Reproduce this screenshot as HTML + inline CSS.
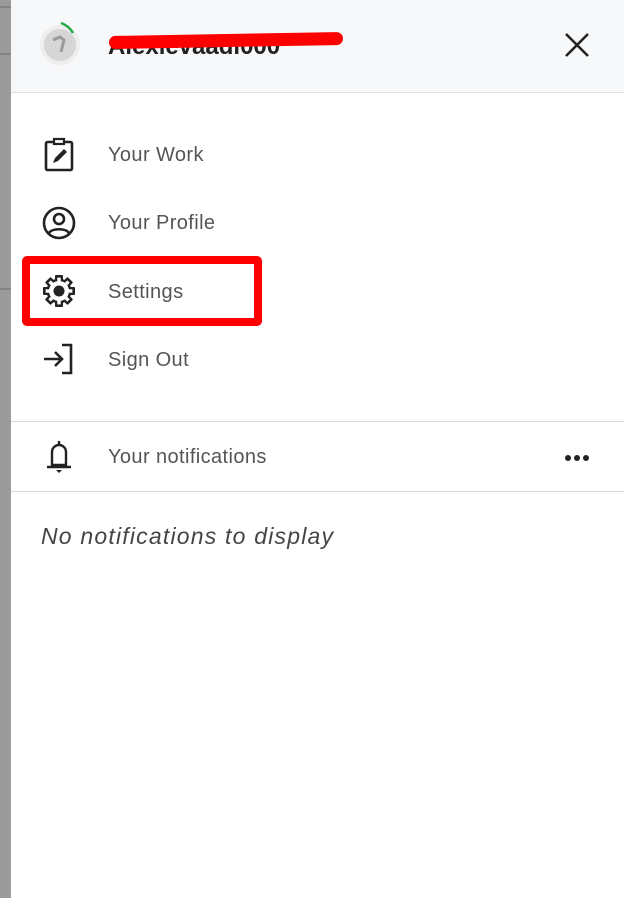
<!DOCTYPE html>
<html><head><meta charset="utf-8"><style>
*{margin:0;padding:0;box-sizing:border-box}
html,body{width:624px;height:898px;overflow:hidden;background:#fff;font-family:"Liberation Sans",sans-serif}
.strip{position:absolute;left:0;top:0;width:11px;height:898px;background:#9b9b9b}
.strip i{position:absolute;left:0;width:11px;height:2px;background:#858585}
.panel{position:absolute;left:11px;top:0;right:0;bottom:0;background:#fff}
.head{position:absolute;left:0;right:0;top:0;height:93px;background:#f7f8fa;border-bottom:1px solid #dcdde0}
.row{position:absolute;left:97px;font-size:20px;letter-spacing:0.4px;color:#555}
.ic{position:absolute}
.hr{position:absolute;left:0;right:0;height:1px;background:#d8d8d8}
</style></head><body>
<div class="strip"><i style="top:6px"></i><i style="top:53px"></i><i style="top:288px"></i></div>
<div class="panel">
<div class="head">
 <svg class="ic" style="left:25px;top:20px" width="50" height="50" viewBox="0 0 50 50">
  <circle cx="24" cy="25" r="20" fill="#eeeeee"/>
  <circle cx="24" cy="25" r="16" fill="#d6d6d6"/>
  <path d="M17 20l7-3 4 3-3 12" stroke="#9a9a9a" stroke-width="3" fill="none"/>
  <path d="M25 3 A22 22 0 0 1 37 13" stroke="#22aa44" stroke-width="2.5" fill="none"/>
 </svg>
 <div style="position:absolute;left:97px;top:33px;font-size:24px;font-weight:bold;color:#222">Alexievaadl000</div>
 <div style="position:absolute;left:98px;top:34px;width:234px;height:13px;background:#f00;border-radius:7px;transform:rotate(-1deg)"></div>
 <svg class="ic" style="left:553px;top:32px" width="26" height="26" viewBox="0 0 26 26"><path d="M2 2L24 24M24 2L2 24" stroke="#222" stroke-width="2.6"/></svg>
</div>

<svg class="ic" style="left:32px;top:137px" width="34" height="36" viewBox="0 0 34 36"><rect x="3" y="5" width="26" height="28" rx="1.5" fill="none" stroke="#222" stroke-width="2.6"/><rect x="11" y="2" width="10" height="5" fill="#fff" stroke="#222" stroke-width="2.2"/><path d="M10 26l2-5 9-9 3 3-9 9z" fill="#222"/></svg>
<div class="row" style="top:144px">Your Work</div>

<svg class="ic" style="left:30px;top:205px" width="36" height="36" viewBox="0 0 36 36"><circle cx="18" cy="18" r="15" fill="none" stroke="#222" stroke-width="2.6"/><circle cx="18" cy="14" r="5" fill="none" stroke="#222" stroke-width="2.6"/><path d="M8 28c3-5 17-5 20 0" fill="none" stroke="#222" stroke-width="2.6"/></svg>
<div class="row" style="top:212px">Your Profile</div>

<div style="position:absolute;left:11px;top:256px;width:240px;height:70px;border:8px solid #f00;border-radius:5px"></div>
<svg class="ic" style="left:30px;top:273px" width="36" height="36" viewBox="0 0 36 36">
 <g fill="#222">
  <circle cx="18" cy="18" r="12.5"/>
  <rect x="14" y="2" width="8" height="32" rx="1"/>
  <rect x="14" y="2" width="8" height="32" rx="1" transform="rotate(45 18 18)"/>
  <rect x="14" y="2" width="8" height="32" rx="1" transform="rotate(90 18 18)"/>
  <rect x="14" y="2" width="8" height="32" rx="1" transform="rotate(135 18 18)"/>
 </g>
 <g fill="#fff">
  <circle cx="18" cy="18" r="10"/>
  <rect x="16.3" y="4.6" width="3.4" height="26.8"/>
  <rect x="16.3" y="4.6" width="3.4" height="26.8" transform="rotate(45 18 18)"/>
  <rect x="16.3" y="4.6" width="3.4" height="26.8" transform="rotate(90 18 18)"/>
  <rect x="16.3" y="4.6" width="3.4" height="26.8" transform="rotate(135 18 18)"/>
 </g>
 <circle cx="18" cy="18" r="5.5" fill="#222"/>
</svg>
<div class="row" style="top:281px">Settings</div>

<svg class="ic" style="left:30px;top:342px" width="36" height="34" viewBox="0 0 36 34"><path d="M21 3h9v28h-9" fill="none" stroke="#222" stroke-width="2.6"/><path d="M3 17h18M14 10l7 7-7 7" fill="none" stroke="#222" stroke-width="2.6"/></svg>
<div class="row" style="top:349px">Sign Out</div>

<div class="hr" style="top:421px"></div>
<svg class="ic" style="left:33px;top:439px" width="30" height="36" viewBox="0 0 30 36"><path d="M15 2v4M8 13a7 7 0 0 1 14 0v13H8z" fill="none" stroke="#222" stroke-width="2.4"/><path d="M3 28h24" stroke="#222" stroke-width="2.6"/><path d="M12 31h6l-3 3z" fill="#222"/></svg>
<div class="row" style="top:446px">Your notifications</div>
<div style="position:absolute;left:554px;top:455px;width:24px;height:6px;display:flex;justify-content:space-between"><b style="width:6px;height:6px;border-radius:3px;background:#222"></b><b style="width:6px;height:6px;border-radius:3px;background:#222"></b><b style="width:6px;height:6px;border-radius:3px;background:#222"></b></div>
<div class="hr" style="top:491px"></div>
<div style="position:absolute;left:30px;top:523px;font-size:23px;letter-spacing:1.2px;font-style:italic;color:#444">No notifications to display</div>
</div>
</body></html>
